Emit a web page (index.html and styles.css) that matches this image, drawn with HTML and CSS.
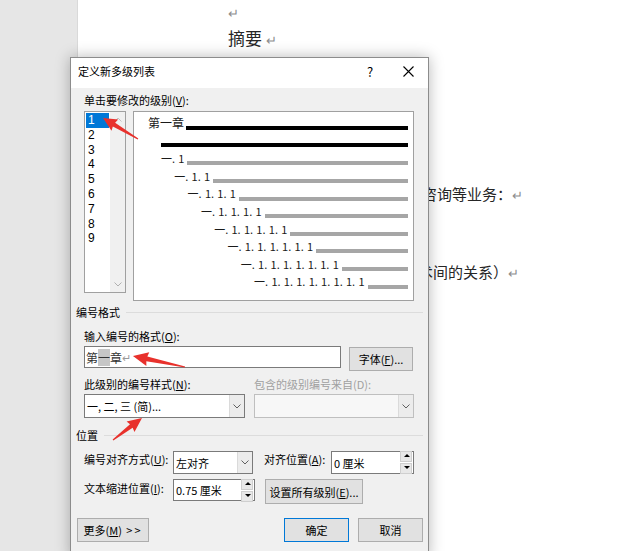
FILE: index.html
```html
<!DOCTYPE html>
<html lang="zh-CN">
<head>
    <meta charset="UTF-8">
    <title>定义新多级列表</title>
    <link rel="stylesheet" href="styles.css">
</head>
<body>
    <div class="app">
        <aside class="gutter"></aside>
        <main class="page">
            <p class="ln"><span class="mark">↵</span></p>
            <p class="ln heading">摘要 <span class="mark">↵</span></p>
            <p class="ln">论文主要内容</p>
            <p class="ln"></p>
            <p class="ln"></p>
            <p class="ln"></p>
            <p class="ln"></p>
            <p class="ln shift1">咨询等业务：<span class="mark">↵</span></p>
            <p class="ln"></p>
            <p class="ln"></p>
            <p class="ln shift2">术间的关系）<span class="mark">↵</span></p>
        </main>
    </div>

    <!-- dialog window -->
    <div class="dialog">
        <div class="dlg-title">
            <h1>定义新多级列表</h1>
            <div class="tbtns">
                <span class="tbtn">?</span>
                <span class="tbtn">
                    <svg width="11" height="11" viewBox="0 0 11 11"><path d="M0.5 0.5L10.5 10.5M10.5 0.5L0.5 10.5" stroke="#000" stroke-width="1.1" fill="none"/></svg>
                </span>
            </div>
        </div>

        <div class="dlg-body">
            <div class="lbl first">单击要修改的级别(<u>V</u>):</div>
            <div class="levels">
                <div class="level-list">
                    <div class="items">
                        <div class="item sel">1</div>
                        <div class="item">2</div>
                        <div class="item">3</div>
                        <div class="item">4</div>
                        <div class="item">5</div>
                        <div class="item">6</div>
                        <div class="item">7</div>
                        <div class="item">8</div>
                        <div class="item">9</div>
                    </div>
                    <div class="sb">
                        <svg width="8" height="5" viewBox="0 0 8 5"><path d="M0.5 4.5L4 1L7.5 4.5" stroke="#c2c2c2" fill="none"/></svg>
                        <svg width="8" height="5" viewBox="0 0 8 5"><path d="M0.5 0.5L4 4L7.5 0.5" stroke="#b0b0b0" fill="none"/></svg>
                    </div>
                </div>
                <div class="preview">
                    <div class="pv-top"><span class="pv-lab big">第一章</span><span class="pv-bar dark"></span></div>
                    <div class="pv-line"></div>
                    <div class="pv-item" style="--lv:0"><span class="pv-lab">一. 1</span><span class="pv-bar"></span></div>
                    <div class="pv-item" style="--lv:1"><span class="pv-lab">一. 1. 1</span><span class="pv-bar"></span></div>
                    <div class="pv-item" style="--lv:2"><span class="pv-lab">一. 1. 1. 1</span><span class="pv-bar"></span></div>
                    <div class="pv-item" style="--lv:3"><span class="pv-lab">一. 1. 1. 1. 1</span><span class="pv-bar"></span></div>
                    <div class="pv-item" style="--lv:4"><span class="pv-lab">一. 1. 1. 1. 1. 1</span><span class="pv-bar"></span></div>
                    <div class="pv-item" style="--lv:5"><span class="pv-lab">一. 1. 1. 1. 1. 1. 1</span><span class="pv-bar"></span></div>
                    <div class="pv-item" style="--lv:6"><span class="pv-lab">一. 1. 1. 1. 1. 1. 1. 1</span><span class="pv-bar"></span></div>
                    <div class="pv-item" style="--lv:7"><span class="pv-lab">一. 1. 1. 1. 1. 1. 1. 1. 1</span><span class="pv-bar"></span></div>
                </div>
            </div>

            <div class="group g1">编号格式</div>
            <div class="lbl l-fmt">输入编号的格式(<u>O</u>):</div>
            <div class="fmt-row">
                <div class="field fmt-input"><span>第</span><span class="hl">一</span><span>章</span><span class="ret">↵</span></div>
                <button class="btn font-btn">字体(<u>F</u>)...</button>
            </div>

            <div class="style-grid">
                <div class="lbl">此级别的编号样式(<u>N</u>):</div>
                <div class="lbl off">包含的级别编号来自(D):</div>
                <div class="combo">
                    <span class="val">一, 二, 三 (简)...</span>
                    <span class="drop"><svg width="8" height="5" viewBox="0 0 8 5"><path d="M0.5 0.5L4 4L7.5 0.5" stroke="#606060" fill="none"/></svg></span>
                </div>
                <div class="combo off">
                    <span class="val"></span>
                    <span class="drop"><svg width="8" height="5" viewBox="0 0 8 5"><path d="M0.5 0.5L4 4L7.5 0.5" stroke="#606060" fill="none"/></svg></span>
                </div>
            </div>

            <div class="group g2">位置</div>
            <div class="pos-row r1">
                <div class="lbl plab">编号对齐方式(<u>U</u>):</div>
                <div class="combo align">
                    <span class="val">左对齐</span>
                    <span class="drop"><svg width="8" height="5" viewBox="0 0 8 5"><path d="M0.5 0.5L4 4L7.5 0.5" stroke="#606060" fill="none"/></svg></span>
                </div>
                <div class="lbl plab2">对齐位置(<u>A</u>):</div>
                <div class="spin at">
                    <span class="val">0 厘米</span>
                    <span class="arrows"><span class="up"></span><span class="down"></span></span>
                </div>
            </div>
            <div class="pos-row r2">
                <div class="lbl plab">文本缩进位置(<u>I</u>):</div>
                <div class="spin indent">
                    <span class="val">0.75 厘米</span>
                    <span class="arrows"><span class="up"></span><span class="down"></span></span>
                </div>
                <button class="btn all-btn">设置所有级别(<u>E</u>)...</button>
            </div>

            <div class="foot">
                <button class="btn more">更多(<u>M</u>) <span class="chev">&gt;&gt;</span></button>
                <button class="btn ok">确定</button>
                <button class="btn">取消</button>
            </div>
        </div>
    </div>

    <!-- red annotation arrows -->
    <svg class="marks" width="640" height="551" viewBox="0 0 640 551">
        <g fill="#e8312c">
            <polygon transform="translate(138 139) rotate(210.96)" points="0,-0.6 28,-2.2 27,-6.5 40.8,0 27,6.5 28,2.2 0,0.6"/>
            <polygon transform="translate(185 367) rotate(191.94)" points="0,-0.6 39,-2.4 38,-7 53.2,0 38,7 39,2.4 0,0.6"/>
            <polygon transform="translate(113 440) rotate(-37.18)" points="0,-0.6 23,-2.2 22,-6.5 36.4,0 22,6.5 23,2.2 0,0.6"/>
        </g>
    </svg>
</body>
</html>
```

FILE: styles.css
```css
/* document behind the dialog */
body {
    margin: 0;
    width: 640px;
    height: 551px;
    overflow: hidden;
    position: relative;
    font-family: "Noto Sans CJK SC", "Noto Sans", sans-serif;
}
.app {
    display: flex;
    height: 100%;
}
.gutter {
    width: 77px;
    background-color: #e6e6e6;
    border-right: 1px solid #d9d9d9;
}
.page {
    flex: 1;
    background-color: #fff;
    padding-left: 150px;
}
.ln {
    margin: 0;
    height: 26px;
    line-height: 26px;
    font-size: 15px;
    color: #262626;
    white-space: nowrap;
}
.ln:first-child {
    margin-top: -1px;
}
.heading {
    font-size: 17px;
}
.mark {
    color: #8c8c8c;
    font-size: 13px;
}
.shift1 {
    margin-left: 194px;
}
.shift2 {
    margin-left: 190px;
}

/* dialog */
.dialog {
    position: absolute;
    left: 70px;
    top: 57px;
    width: 357px;
    height: 500px;
    background-color: #f0f0f0;
    border: 1px solid #8c8c8c;
    box-shadow: 0 0 14px rgba(0, 0, 0, 0.28);
    font-size: 11px;
    color: #000;
}
.dlg-title {
    height: 30px;
    background-color: #fff;
    display: flex;
    align-items: flex-start;
}
.dlg-title h1 {
    margin: 5px 0 0 7px;
    font-size: 11px;
    font-weight: normal;
    line-height: 16px;
}
.tbtns {
    margin-left: auto;
    display: flex;
    padding-right: 1px;
}
.tbtn {
    width: 38px;
    height: 26px;
    display: flex;
    align-items: center;
    justify-content: center;
    font-size: 13px;
}
.dlg-body {
    padding: 0 13px;
}
.lbl {
    line-height: 16px;
    white-space: nowrap;
}
.lbl.first {
    margin-top: 4px;
}
.lbl.off {
    color: #a0a0a0;
}
u {
    text-decoration: underline;
    text-underline-offset: 1px;
}

/* level list + preview */
.levels {
    display: flex;
    align-items: flex-start;
    gap: 7px;
    margin-top: 3px;
}
.level-list {
    width: 42px;
    height: 182px;
    box-sizing: border-box;
    border: 1px solid #a0a0a0;
    background-color: #fff;
    display: flex;
}
.items {
    flex: 1;
    padding: 1px;
}
.item {
    height: 14.8px;
    line-height: 14.8px;
    padding-left: 2px;
    font-family: "Liberation Sans", Arial, sans-serif;
    font-size: 12px;
}
.item.sel {
    background-color: #0078d7;
    color: #fff;
}
.sb {
    width: 15px;
    background-color: #f0f0f0;
    display: flex;
    flex-direction: column;
    justify-content: space-between;
    align-items: center;
    padding: 5px 0;
    box-sizing: border-box;
}
.preview {
    width: 281px;
    height: 190px;
    box-sizing: border-box;
    border: 1px solid #a0a0a0;
    background-color: #fff;
    padding: 3px 5px 0 14px;
}
.pv-top {
    display: flex;
    align-items: flex-start;
    height: 16px;
}
.pv-lab {
    font-size: 11px;
    line-height: 17.6px;
    white-space: nowrap;
    color: #1a1a1a;
    word-spacing: 0.8px;
}
.pv-lab.big {
    font-size: 12px;
    line-height: 16px;
}
.pv-bar {
    flex: 1;
    height: 4px;
    margin: 11.3px 0 0 3px;
    background-color: #a6a6a6;
}
.pv-bar.dark {
    background-color: #000;
    margin: 11px 0 0 2px;
}
.pv-line {
    height: 4px;
    background-color: #000;
    margin: 12px 0 0 13px;
}
.pv-item {
    display: flex;
    align-items: flex-start;
    height: 17.6px;
    margin-left: calc(13px + var(--lv) * 13.3px);
}
.pv-line + .pv-item {
    margin-top: 3.2px;
}

/* groups */
.group {
    display: flex;
    align-items: center;
    gap: 6px;
    line-height: 16px;
    margin: 0 -8px;
}
.group::after {
    content: "";
    flex: 1;
    height: 1px;
    background-color: #dcdcdc;
}
.g1 {
    margin-top: 3px;
}
.g2 {
    margin-top: 9px;
}
.l-fmt {
    margin-top: 8px;
}

/* inputs */
.field, .combo, .spin {
    box-sizing: border-box;
    border: 1px solid #7a7a7a;
    background-color: #fff;
    display: flex;
    align-items: center;
}
.fmt-row {
    display: flex;
    align-items: flex-start;
    gap: 8px;
    margin-top: 2px;
}
.fmt-input {
    width: 257px;
    height: 22px;
    padding-left: 1px;
    color: #333;
    font-size: 12px;
}
.hl {
    background-color: #c6c6c6;
}
.ret {
    color: #9a9a9a;
    font-size: 11px;
}
.btn {
    box-sizing: border-box;
    height: 24px;
    border: 1px solid #adadad;
    background-color: #e1e1e1;
    font-family: inherit;
    font-size: 11px;
    color: #000;
    padding: 0;
    white-space: nowrap;
}
.font-btn {
    width: 64px;
    margin-top: 1px;
}
.style-grid {
    display: grid;
    grid-template-columns: 161px 160px;
    column-gap: 9px;
    margin-top: 5px;
}
.style-grid .combo {
    margin-top: 2px;
    height: 24px;
}
.combo .val, .spin .val {
    flex: 1;
    padding-left: 2px;
    white-space: nowrap;
}
.drop {
    width: 14px;
    align-self: stretch;
    background-color: #ececec;
    border-left: 1px solid #dadada;
    display: flex;
    align-items: center;
    justify-content: center;
}
.combo.off {
    border-color: #bfbfbf;
    background-color: #f7f7f7;
}

/* position rows */
.pos-row {
    display: flex;
    align-items: flex-start;
}
.r1 {
    margin-top: 8px;
}
.r2 {
    margin-top: 5px;
}
.plab {
    width: 89px;
}
.r2 .plab {
    margin-top: 1px;
}
.combo.align {
    width: 80px;
    height: 23px;
}
.plab2 {
    width: 67px;
    margin-left: 11px;
}
.spin {
    height: 23px;
    padding-right: 1px;
}
.spin.at {
    width: 83px;
}
.spin.indent {
    width: 82px;
    height: 22px;
}
.arrows {
    display: flex;
    flex-direction: column;
    gap: 1px;
    width: 12px;
}
.arrows span {
    height: 9px;
    background-color: #e8e8e8;
    border: 1px solid #cfcfcf;
    position: relative;
}
.arrows span::after {
    content: "";
    position: absolute;
    left: 3px;
    top: 2px;
    border-left: 3px solid transparent;
    border-right: 3px solid transparent;
}
.arrows .up::after {
    border-bottom: 3px solid #000;
}
.arrows .down::after {
    border-top: 3px solid #000;
}
.all-btn {
    width: 98px;
    height: 25px;
    margin-left: 10px;
}

/* footer buttons */
.foot {
    display: flex;
    gap: 9px;
    margin: 14px -8px 0 -7px;
}
.foot .btn {
    width: 65px;
}
.foot .more {
    width: 72px;
    margin-right: auto;
}
.chev {
    letter-spacing: 2px;
    margin-left: 2px;
}
.btn.ok {
    border-color: #0078d7;
}

/* annotation layer */
.marks {
    position: absolute;
    left: 0;
    top: 0;
    pointer-events: none;
}
```
